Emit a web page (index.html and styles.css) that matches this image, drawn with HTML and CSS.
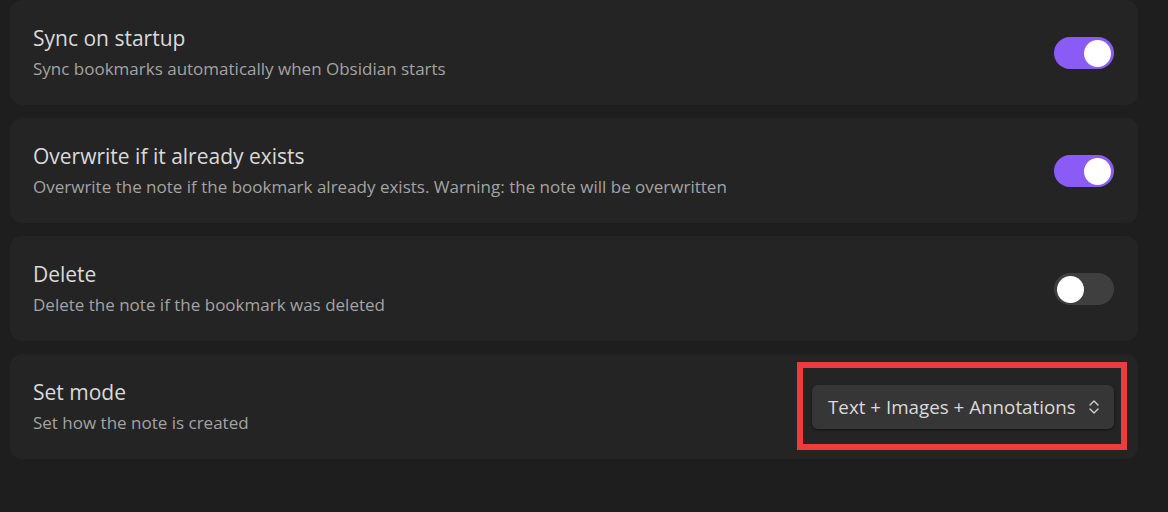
FILE: index.html
```html
<!DOCTYPE html>
<html>
<head>
<meta charset="utf-8">
<link rel="stylesheet" href="styles.css">
</head>
<body>
<div class="list">
  <div class="item first">
    <div class="info">
      <div class="name">Sync on startup</div>
      <div class="desc">Sync bookmarks automatically when Obsidian starts</div>
    </div>
    <div class="toggle on"><span class="knob"></span></div>
  </div>
  <div class="item">
    <div class="info">
      <div class="name">Overwrite if it already exists</div>
      <div class="desc">Overwrite the note if the bookmark already exists. Warning: the note will be overwritten</div>
    </div>
    <div class="toggle on"><span class="knob"></span></div>
  </div>
  <div class="item">
    <div class="info">
      <div class="name">Delete</div>
      <div class="desc">Delete the note if the bookmark was deleted</div>
    </div>
    <div class="toggle"><span class="knob"></span></div>
  </div>
  <div class="item">
    <div class="info">
      <div class="name">Set mode</div>
      <div class="desc">Set how the note is created</div>
    </div>
    <div class="select-wrap">
      <div class="select">
        <span>Text + Images + Annotations</span>
        <svg class="chev" width="12" height="18" viewBox="0 0 12 18"><path d="M2 7 L6 3 L10 7 M2 11 L6 15 L10 11" fill="none" stroke="#cfcfcf" stroke-width="1.4" stroke-linecap="round" stroke-linejoin="round"/></svg>
      </div>
      <div class="highlight"></div>
    </div>
  </div>
</div>
</body>
</html>
```
FILE: styles.css
```css
html, body {
  margin: 0;
  padding: 0;
  background: #1e1e1e;
  height: 100%;
  overflow: hidden;
}
body {
  font-family: "Open Sans", "Noto Sans", sans-serif;
}
.list {
  display: flex;
  flex-direction: column;
  gap: 13px;
  padding: 0 30px 0 10px;
}
.item {
  background: #242424;
  border-radius: 12px;
  height: 105px;
  box-sizing: border-box;
  padding: 0 24px 0 23px;
  display: flex;
  align-items: center;
  justify-content: space-between;
}
.info {
  display: flex;
  flex-direction: column;
}
.name {
  color: #dadada;
  font-size: 21px;
  line-height: 24px;
}
.desc {
  color: #a3a3a3;
  font-size: 17px;
  line-height: 22px;
  margin-top: 8px;
}
.toggle {
  width: 60px;
  height: 32px;
  border-radius: 16px;
  background: #3f3f3f;
  position: relative;
  flex-shrink: 0;
}
.toggle.on {
  background: #8a5cf5;
}
.knob {
  position: absolute;
  top: 3px;
  left: 3px;
  width: 27px;
  height: 27px;
  border-radius: 50%;
  background: #ffffff;
}
.toggle.on .knob {
  left: 30px;
}
.select-wrap {
  position: relative;
}
.select {
  width: 302px;
  height: 44px;
  box-sizing: border-box;
  background: #363636;
  border-radius: 6px;
  box-shadow: 0 1px 3px rgba(0,0,0,0.5);
  display: flex;
  align-items: center;
  justify-content: space-between;
  padding: 0 14px 0 16px;
  color: #dadada;
  font-size: 18.8px;
}
.chev {
  display: block;
}
.highlight {
  position: absolute;
  left: -15px;
  top: -23px;
  right: -13px;
  bottom: -21px;
  border: 6px solid #ee3b3b;
}
```
